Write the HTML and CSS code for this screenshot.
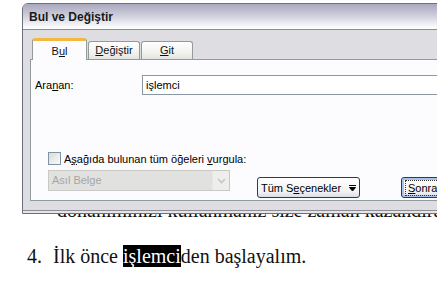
FILE: index.html
```html
<!DOCTYPE html>
<html>
  <head>
    <title>Bul ve Değiştir</title>
    <link rel="stylesheet" href="styles.css">
  </head>
  <body>
    <div class="doc">
      <p class="line cont">donanımınızı kullanmanız size zaman kazandırabilir.</p>
      <p class="line item"><span class="num">4.</span><span>İlk önce <span class="hit">işlemci</span>den başlayalım.</span></p>
    </div>

    <!-- find/replace dialog lies over the document -->
    <div class="dialog">
      <div class="titlebar">Bul ve Değiştir</div>
      <div class="dlg-body">
        <div class="tabs">
          <div class="tab active">B<u>u</u>l</div>
          <div class="tab"><u>D</u>eğiştir</div>
          <div class="tab"><u>G</u>it</div>
        </div>
        <div class="panel">
          <div class="find-row">
            <label class="find-label">Ara<u>n</u>an:</label>
            <div class="textbox">işlemci</div>
          </div>
          <div class="check-row">
            <span class="checkbox"></span>
            <span>A<u>ş</u>ağıda bulunan tüm öğeleri <u>v</u>urgula:</span>
          </div>
          <div class="bottom-row">
            <div class="combo">
              <span class="combo-text">Asıl Belge</span>
              <span class="combo-btn">
                <svg width="9" height="6" viewBox="0 0 9 6"><path d="M1 1l3.5 3.5L8 1" fill="none" stroke="#c4c8cc" stroke-width="1.6"/></svg>
              </span>
            </div>
            <button class="btn more"><span>Tüm S<u>e</u>çenekler</span><svg class="more-ico" width="7" height="8" viewBox="0 0 7 8"><path d="M0 1.5h7M0.5 3.5h6L3.5 7z" fill="#000" stroke="#000" stroke-width="1"/></svg></button>
            <button class="btn next"><span class="focus"><u>S</u>onraki Bul</span></button>
          </div>
        </div>
      </div>
    </div>
  </body>
</html>
```

FILE: styles.css
```css
html, body {
  margin: 0;
  padding: 0;
}

body {
  width: 437px;
  height: 285px;
  overflow: hidden;
  background: #fff;
  position: relative;
  font-family: "Liberation Sans", Arial, sans-serif;
}

/* document behind the dialog */
.doc {
  padding-top: 199px;
  font-family: "Liberation Serif", "Times New Roman", "DejaVu Serif", serif;
  font-size: 20px;
  line-height: 23px;
  color: #111;
}

.line {
  margin: 0 0 23px 0;
  white-space: nowrap;
}

.cont {
  padding-left: 57px;
}

.item {
  display: flex;
  padding-left: 27px;
}

.num {
  width: 26px;
}

.hit {
  background: #000;
  color: #fff;
}

/* dialog */
.dialog {
  position: absolute;
  left: 22px;
  top: 3px;
  width: 480px;
  height: 209px;
  border: 1px solid #6f6f7a;
  border-radius: 6px 6px 0 0;
  background: #dedde2;
  box-shadow: inset 0 -2px 0 #e6e6ea, inset 0 -3px 0 #8e8e98;
  font-size: 11px;
  color: #000;
}

.titlebar {
  height: 25px;
  line-height: 26px;
  padding-left: 6px;
  border-bottom: 1px solid #8a8a98;
  border-radius: 5px 5px 0 0;
  background: linear-gradient(#a9a8bf, #c8c8d8 40%, #f4f4f8 85%, #ffffff);
  font-size: 12px;
  font-weight: bold;
  color: #1a1a1a;
}

.dlg-body {
  padding: 8px 0 0 7px;
}

.tabs {
  display: flex;
  align-items: flex-end;
  margin-left: 2px;
  height: 21px;
  position: relative;
  z-index: 1;
}

.tab {
  width: 50px;
  height: 17px;
  line-height: 17px;
  text-align: center;
  border: 1px solid #919b9c;
  border-bottom: none;
  border-radius: 3px 3px 0 0;
  background: linear-gradient(#ffffff, #f2f2f0 60%, #e4e4e0);
  margin-right: 1px;
  color: #111;
}

.tab.active {
  width: 53px;
  height: 19px;
  line-height: 20px;
  margin-bottom: -1px;
  border-top: 3px solid #f2b844;
  background: #fcfcfe;
}

.panel {
  height: 140px;
  border: 1px solid #919b9c;
  background: #fcfcfe;
}

.find-row {
  display: flex;
  align-items: center;
  margin-top: 15px;
  padding-left: 4px;
}

.find-label {
  width: 107px;
}

.textbox {
  flex: 1;
  height: 18px;
  line-height: 18px;
  padding-left: 3px;
  border: 1px solid #8a96a2;
  background: #fff;
}

.check-row {
  display: flex;
  align-items: center;
  gap: 3px;
  margin-top: 57px;
  padding-left: 17px;
  height: 13px;
}

.checkbox {
  width: 11px;
  height: 11px;
  border: 1px solid #7c93ab;
  background: linear-gradient(135deg, #dcdcd4, #fafafa);
}

.bottom-row {
  display: flex;
  align-items: flex-start;
  margin-top: 5px;
  padding-left: 17px;
}

.combo {
  display: flex;
  width: 180px;
  height: 19px;
  border: 1px solid #c9c9c6;
  background: #e1e1df;
}

.combo-text {
  flex: 1;
  line-height: 19px;
  padding-left: 3px;
  color: #a6a6a6;
}

.combo-btn {
  width: 16px;
  display: flex;
  align-items: center;
  justify-content: center;
  border-left: 1px solid #e8e8e6;
  background: #eeeeec;
}

.btn {
  height: 21px;
  margin-top: 7px;
  padding: 0;
  border: 1px solid #1f3c6e;
  border-radius: 3px;
  background: linear-gradient(#ffffff, #f4f4f4 70%, #d8dde8);
  font-family: inherit;
  font-size: 11px;
  color: #000;
  white-space: nowrap;
}

.more {
  width: 103px;
  margin-left: 27px;
  display: flex;
  align-items: center;
  justify-content: center;
  gap: 8px;
}

.next {
  width: 90px;
  margin-left: 41px;
  box-shadow: inset 0 0 0 2px #a8c4ec;
  text-align: left;
  padding-left: 3px;
}

.focus {
  display: inline-block;
  padding: 1px 2px;
  border: 1px dotted #333;
  line-height: 12px;
}
```
